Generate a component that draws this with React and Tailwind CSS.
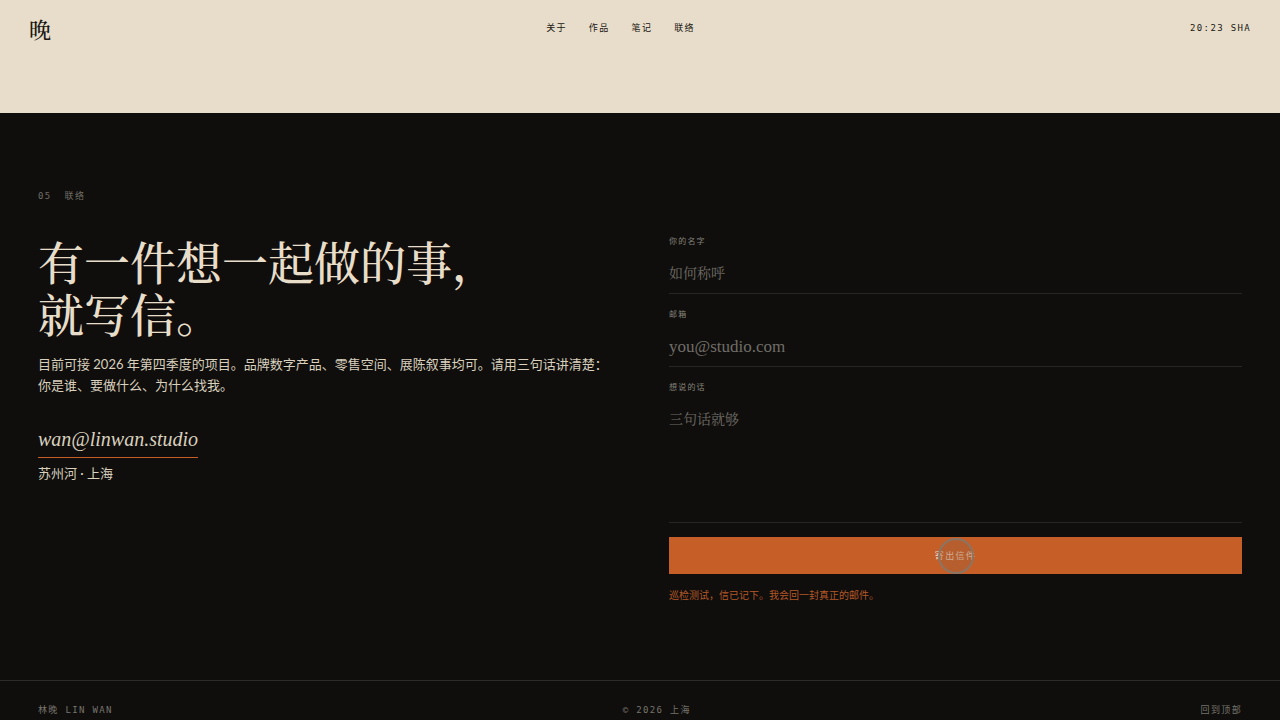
import React from "react";

const links = [
  { href: "#about", label: "关于" },
  { href: "#work", label: "作品" },
  { href: "#notes", label: "笔记" },
  { href: "#contact", label: "联络" },
];

const serif = "font-['Noto_Serif_CJK_SC','Noto_Serif_SC','Source_Han_Serif_SC','Noto_Sans_CJK_SC',serif]";
const mono = "font-['DejaVu_Sans_Mono','Noto_Sans_CJK_SC',monospace]";
const fieldLabel = "block text-[8px] leading-[18px] tracking-[0.15em] text-[#85827a]";
const field =
  "block w-full rounded-none border-b border-[#272623] bg-transparent text-[#e7ddc9] placeholder:text-[#6f6d67] placeholder:opacity-100 focus:outline-none";

function Header() {
  return (
    <header className={`${mono} flex h-[113px] items-start justify-between bg-[#e7ddca] px-[29px] pt-4 text-[9px] tracking-[0.15em] text-[#1a1712]`}>
      <a href="#top" className={`${serif} text-[22px] leading-[26px] font-medium tracking-normal`}>晚</a>
      <nav className="flex gap-[22px] leading-6">
        {links.map((l) => (
          <a key={l.href} href={l.href}>{l.label}</a>
        ))}
      </nav>
      <span className="leading-6">20:23 SHA</span>
    </header>
  );
}

function ContactForm() {
  return (
    <form className="flex flex-col gap-3" onSubmit={(e) => e.preventDefault()}>
      <div>
        <label htmlFor="name" className={`${mono} ${fieldLabel}`}>你的名字</label>
        <input id="name" type="text" placeholder="如何称呼" className={`${serif} ${field} h-[43px] text-[14px]`} />
      </div>
      <div>
        <label htmlFor="email" className={`${mono} ${fieldLabel}`}>邮箱</label>
        <input id="email" type="email" placeholder="you@studio.com" className={`font-['Liberation_Serif',serif] ${field} h-[43px] pt-1 text-[17px]`} />
      </div>
      <div>
        <label htmlFor="message" className={`${mono} ${fieldLabel}`}>想说的话</label>
        <textarea id="message" placeholder="三句话就够" className={`${serif} ${field} h-[126px] resize-none pt-[11px] text-[14px] leading-5`} />
      </div>
      <button type="submit" className={`${mono} relative mt-[2px] flex h-[37px] w-full items-center justify-center bg-[#c55e27] pt-[2px] text-[9px] tracking-[0.15em] text-[#e7ddc9]`}>
        寄出信件
        <span aria-hidden="true" className="absolute left-1/2 top-1/2 size-9 -translate-x-1/2 -translate-y-1/2 rounded-full border-2 border-[#8a7464] bg-[#a3603d]/40" />
      </button>
      <p role="status" className={`${mono} text-[10px] leading-5 text-[#b45828]`}>巡检测试，信已记下。我会回一封真正的邮件。</p>
    </form>
  );
}

export default function App() {
  return (
    <div id="top" className="min-h-screen bg-[#0f0e0c] text-[#e7ddc9]">
      <Header />
      <main id="contact" className="px-[38px] pb-[74px] pt-[75px]">
        <p className={`${mono} flex gap-[13px] text-[9px] leading-4 tracking-[0.15em] text-[#6f6d66]`}>
          <span>05</span>
          <span>联络</span>
        </p>
        <div className="mt-[29px] grid grid-cols-2 gap-[58px]">
          <div className="pt-px">
            <h1 className={`${serif} text-[46px] font-medium leading-[52px]`}>
              有一件想一起做的事，
              <br />
              就写信。
            </h1>
            <p className="mt-4 font-['Lato','Noto_Sans_CJK_SC',sans-serif] text-[13px] leading-[21px] text-[#d9d0be]">
              目前可接 2026 年第四季度的项目。品牌数字产品、零售空间、展陈叙事均可。请用三句话讲清楚：你是谁、要做什么、为什么找我。
            </p>
            <p className="mt-[27px] w-fit border-b border-[#c55e27] pb-[2px] font-['Liberation_Serif',serif] text-[20px] italic leading-8 text-[#d9d0be]">
              <a href="mailto:wan@linwan.studio">wan@linwan.studio</a>
            </p>
            <p className="mt-[5px] font-['Lato','Noto_Sans_CJK_SC',sans-serif] text-[13px] leading-[21px] text-[#d9d0be]">苏州河 · 上海</p>
          </div>
          <ContactForm />
        </div>
      </main>
      <footer className={`${mono} flex items-center justify-between border-t border-[#2c2b28] px-[38px] pt-[21px] text-[9px] leading-4 tracking-[0.15em] text-[#77746d]`}>
        <span>林晚 LIN WAN</span>
        <span>© 2026 上海</span>
        <a href="#top">回到顶部</a>
      </footer>
    </div>
  );
}
